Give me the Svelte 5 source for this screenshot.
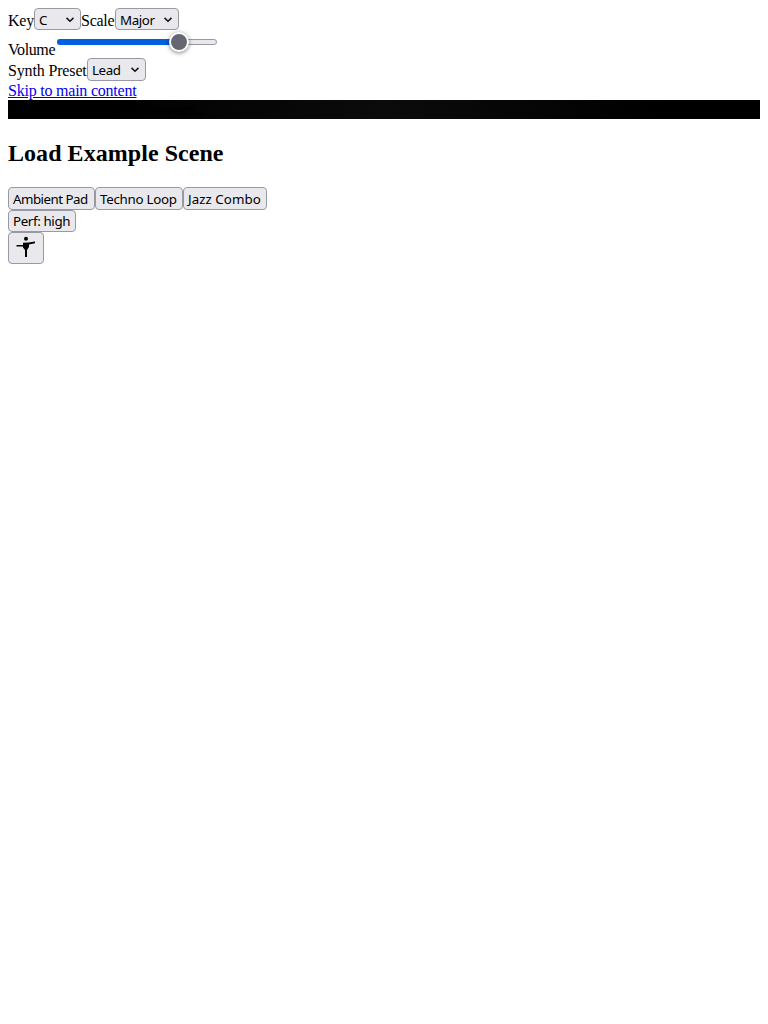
<script>
  let volume = $state(0.78);
  const scenes = [
    { name: 'Ambient Pad', w: 87, s: -0.52 },
    { name: 'Techno Loop', w: 88, s: -0.27 },
    { name: 'Jazz Combo', w: 84, s: 0.05 }
  ];
</script>

{#snippet picker(label, width)}
  <button class="control picker" style:width="{width}px">
    <span class="label">{label}</span>
    <svg class="chevron" width="8" height="6" viewBox="0 0 8 6"><path d="M.5 .9 4 4.3 7.5 .9" /></svg>
  </button>
{/snippet}

<main>
  <div class="row keys">
    <span class="text key">Key</span>{@render picker('C', 47)}<span class="text scale">Scale</span>{@render picker('Major', 64)}
  </div>
  <div class="row volume">
    <span class="text">Volume</span>
    <div class="slider">
      <div class="fill" style:width="{volume * 100}%"></div>
      <div class="thumb"></div>
    </div>
  </div>
  <div class="row synth">
    <span class="text">Synth Preset</span>{@render picker('Lead', 59)}
  </div>
  <div class="skip"><a href="#main">Skip to main content</a></div>
  <div class="bar">Initializing your sonic voyage...</div>
  <h2>Load Example Scene</h2>
  <div class="row scenes">
    {#each scenes as s}
      <button class="control" style:width="{s.w}px"><span class="label" style:letter-spacing="{s.s}px">{s.name}</span></button>
    {/each}
  </div>
  <div class="row"><button class="control perf"><span class="label">Perf: high</span></button></div>
  <button class="control access" aria-label="Accessibility">
    <svg width="20" height="22" viewBox="0 0 20 22">
      <circle cx="10" cy="2.7" r="2" />
      <path d="M7 6.8 12.5 6.5 19 5.5V7.3L13 8.5V11L11 14V21H9V14L7 11.5V10.5H.5V9H7Z" />
    </svg>
  </button>
</main>

<style>
  main {
    padding: 8px;
    font: 16px/19px "Liberation Serif", serif;
    color: #000;
  }
  .row { display: flex; align-items: flex-start; }
  .control {
    box-sizing: border-box;
    display: flex;
    align-items: center;
    height: 22px;
    margin: 0;
    padding: 0 4px;
    border: 1px solid #9998a5;
    border-radius: 4px;
    background: #e9e9ed;
    color: #000;
    font: 13.333px/18px "Noto Sans", sans-serif;
    flex: none;
  }
  .label { flex: none; white-space: nowrap; padding-top: 2px; }
  .picker { justify-content: space-between; padding-right: 6px; letter-spacing: -0.4px; }
  .chevron { flex: none; fill: none; stroke: #111; stroke-width: 1.5; margin-top: 1px; }
  .text { flex: none; white-space: nowrap; letter-spacing: -0.25px; }
  .keys { height: 22px; }
  .keys .text { padding-top: 3px; }
  .key { width: 26px; }
  .scale { width: 34px; }
  .volume { height: 28px; }
  .volume .text { width: 49px; padding-top: 10px; letter-spacing: -0.4px; }
  .slider {
    position: relative;
    box-sizing: border-box;
    width: 160px;
    height: 6px;
    margin-top: 9px;
    border: 1px solid #9998a5;
    border-radius: 3px;
    background: #e9e9ed;
  }
  .fill { position: absolute; inset: -1px auto -1px -1px; background: #0060df; border-radius: 3px; }
  .thumb {
    position: absolute;
    left: 111px;
    top: -8px;
    box-sizing: border-box;
    width: 20px;
    height: 20px;
    border: 2px solid #fff;
    border-radius: 50%;
    background: #676774;
    box-shadow: 0 1px 4px rgba(0, 0, 0, .5);
  }
  .synth { height: 23px; }
  .synth .text { width: 79px; padding-top: 3px; letter-spacing: -0.15px; }
  .synth .control { height: 23px; }
  .synth .label { padding-top: 1px; }
  .skip { height: 19px; }
  a { color: #0000ee; letter-spacing: -0.22px; }
  .bar { height: 19px; letter-spacing: -0.15px; background: radial-gradient(circle at center, #0b0b0b, #000 280px); }
  h2 { margin: 20px 0; font-size: 24px; line-height: 28px; letter-spacing: 0.05px; }
  .scenes .control { height: 23px; }
  .scenes .label { padding-top: 1px; }
  .perf { width: 68px; letter-spacing: -0.37px; }
  .perf .label { padding-top: 0; }
  .access { width: 36px; height: 32px; justify-content: center; }
  .access svg { margin: -2px 0 0 -1px; }
</style>
